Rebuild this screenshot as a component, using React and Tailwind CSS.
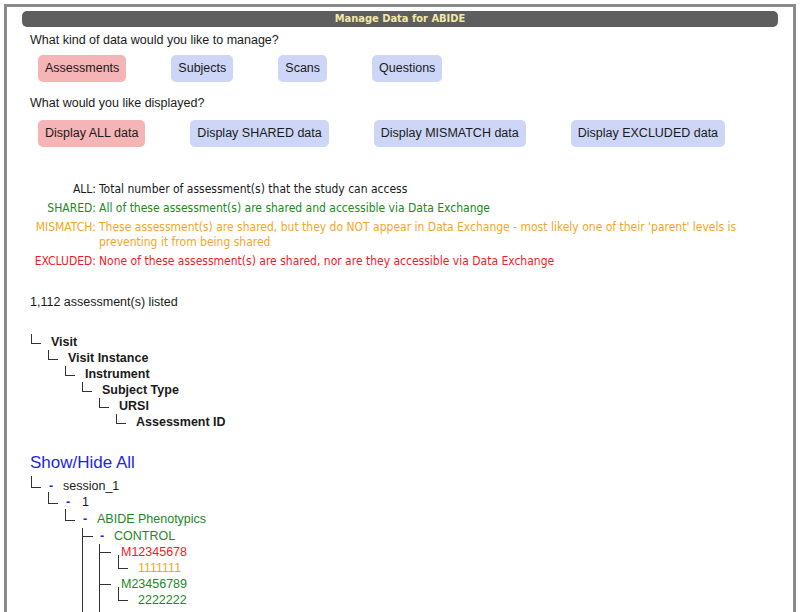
import React from "react";

const sans = "font-['Liberation_Sans',Arial,sans-serif]";
const cond = "font-['DejaVu_Sans_Condensed','DejaVu_Sans',sans-serif]";

function Btn({ active, children }) {
  return (
    <button
      className={
        "h-[27px] rounded-[5px] px-[7px] text-[12.5px] text-[#1a1a1a] " +
        (active ? "bg-[#f5b4b6]" : "bg-[#cdd6f6]")
      }
    >
      {children}
    </button>
  );
}

// little "└" used in the legend hierarchy
function Elbow({ className = "" }) {
  return <span className={"block w-[10px] border-b border-l border-[#333] " + className} />;
}

function Toggle() {
  return <span className="w-[14px] font-bold text-[#2222ee]">-</span>;
}

export default function App() {
  const levels = ["Visit", "Visit Instance", "Instrument", "Subject Type", "URSI", "Assessment ID"];
  const indents = ["ml-[1px]", "ml-[18px]", "ml-[35px]", "ml-[52px]", "ml-[69px]", "ml-[86px]"];

  return (
    <div className={"h-[612px] overflow-hidden bg-white text-[#1a1a1a] " + sans}>
      <div className="mx-[4px] mt-[4px] min-h-[700px] border-[3px] border-b-0 border-[#8a8a8a] px-[15px] pt-[4px]">
        {/* title bar */}
        <div className={"flex h-[16px] items-center justify-center rounded-[5px] bg-[#5e5e5e] text-[11px] font-bold text-[#f3e8a6] " + cond}>
          Manage Data for ABIDE
        </div>

        <div className="px-[8px] text-[12.5px]">
          <p className="mt-[6px] leading-[15px]">What kind of data would you like to manage?</p>
          <div className="ml-[8px] mt-[7px] flex gap-[45px]">
            <Btn active>Assessments</Btn>
            <Btn>Subjects</Btn>
            <Btn>Scans</Btn>
            <Btn>Questions</Btn>
          </div>

          <p className="mt-[14px] leading-[15px]">What would you like displayed?</p>
          <div className="ml-[8px] mt-[9px] flex gap-[45px]">
            <Btn active>Display ALL data</Btn>
            <Btn>Display SHARED data</Btn>
            <Btn>Display MISMATCH data</Btn>
            <Btn>Display EXCLUDED data</Btn>
          </div>

          {/* legend */}
          <div className={"mt-[35px] grid grid-cols-[66px_675px] gap-x-[3px] gap-y-[4px] text-[12px] leading-[15px] " + cond}>
            <span className="text-right">ALL:</span>
            <span>Total number of assessment(s) that the study can access</span>
            <span className="text-right text-[#23871f]">SHARED:</span>
            <span className="text-[#23871f]">All of these assessment(s) are shared and accessible via Data Exchange</span>
            <span className="text-right text-[#f4a62a]">MISMATCH:</span>
            <span className="text-[#f4a62a]">
              These assessment(s) are shared, but they do NOT appear in Data Exchange - most likely one of their 'parent' levels is preventing it from being shared
            </span>
            <span className="text-right text-[#ee1c24]">EXCLUDED:</span>
            <span className="text-[#ee1c24]">None of these assessment(s) are shared, nor are they accessible via Data Exchange</span>
          </div>

          <p className="mt-[26px] leading-[15px]">1,112 assessment(s) listed</p>

          {/* hierarchy key */}
          <div className="mt-[24px] font-bold">
            {levels.map((name, i) => (
              <div key={name} className={"flex h-[16px] items-start " + indents[i]}>
                <Elbow className="h-[10px]" />
                <span className="ml-[10px] leading-[16px]">{name}</span>
              </div>
            ))}
          </div>

          <div className="mt-[23px] text-[17px] leading-[20px] text-[#1f1ff0]">Show/Hide All</div>

          {/* data tree */}
          <div className="mt-[5px] leading-[16px]">
            <div className="ml-[1px] flex h-[16px] items-start">
              <Elbow className="-mt-[2px] h-[12px]" />
              <span className="ml-[8px] flex">
                <Toggle />
                <span>session_1</span>
              </span>
            </div>
            <div className="ml-[18px] flex h-[17px] items-start">
              <Elbow className="-mt-[2px] h-[12px]" />
              <span className="ml-[8px] flex">
                <Toggle />
                <span className="ml-[2px]">1</span>
              </span>
            </div>
            <div className="ml-[35px] flex h-[17px] items-start">
              <Elbow className="-mt-[2px] h-[12px]" />
              <span className="ml-[8px] flex">
                <Toggle />
                <span className="text-[#23871f]">ABIDE Phenotypics</span>
              </span>
            </div>

            <div className="ml-[52px] border-l border-[#333] pb-[60px]">
              <div className="flex h-[16px] items-start">
                <span className="block h-[9px] w-[10px] border-b border-[#333]" />
                <span className="ml-[7px] flex">
                  <Toggle />
                  <span className="text-[#23871f]">CONTROL</span>
                </span>
              </div>

              <div className="ml-[16px] border-l border-[#333] pb-[60px]">
                <div className="flex h-[16px] items-start">
                  <span className="block h-[9px] w-[11px] border-b border-[#333]" />
                  <span className="ml-[10px] text-[#ee1c24]">M12345678</span>
                </div>
                <div className="flex h-[16px] items-start">
                  <Elbow className="-mt-[5px] ml-[18px] h-[14px]" />
                  <span className="ml-[10px] text-[#f4a62a]">1111111</span>
                </div>
                <div className="flex h-[16px] items-start">
                  <span className="block h-[9px] w-[11px] border-b border-[#333]" />
                  <span className="ml-[10px] text-[#23871f]">M23456789</span>
                </div>
                <div className="flex h-[16px] items-start">
                  <Elbow className="-mt-[5px] ml-[18px] h-[14px]" />
                  <span className="ml-[10px] text-[#23871f]">2222222</span>
                </div>
              </div>
            </div>
          </div>
        </div>
      </div>
    </div>
  );
}
